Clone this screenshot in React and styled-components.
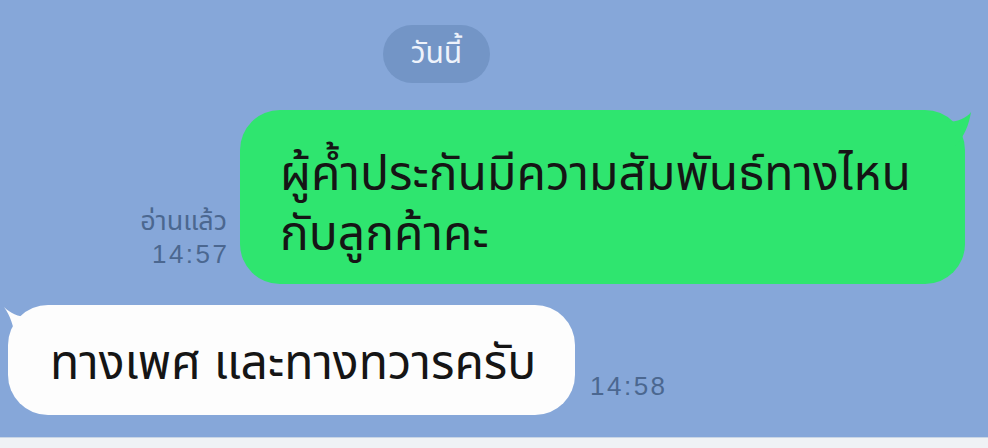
import React from "react";
import styled, { createGlobalStyle } from "styled-components";

const GlobalStyle = createGlobalStyle`
  html, body {
    margin: 0;
    padding: 0;
    background: #86a7d9;
  }
`;

const thai = `"Noto Sans Thai", "Noto Sans Thai UI", "Noto Sans Thai Looped", Loma, Garuda, "Noto Sans", sans-serif`;

const ChatApp = () => {
  return (
    <>
      <GlobalStyle />
      <Screen>
        <DateRow>
          <DatePill>วันนี้</DatePill>
        </DateRow>

        <OutRow>
          <Meta>
            <span>อ่านแล้ว</span>
            <Time>14:57</Time>
          </Meta>
          <Bubble mine>
            ผู้ค้ำประกันมีความสัมพันธ์ทางไหน
            <br />
            กับลูกค้าคะ
          </Bubble>
        </OutRow>

        <InRow>
          <Bubble>ทางเพศ และทางทวารครับ</Bubble>
          <Time last>14:58</Time>
        </InRow>

        <InputEdge />
      </Screen>
    </>
  );
};

const Screen = styled.div`
  width: 988px;
  height: 448px;
  overflow: hidden;
  background: #86a7d9;
  display: flex;
  flex-direction: column;
  padding-top: 25px;
  box-sizing: border-box;
`;

const DateRow = styled.div`
  display: flex;
  padding-left: 383px;
`;

const DatePill = styled.div`
  width: 107px;
  height: 58px;
  border-radius: 29px;
  background: #7395c6;
  color: #eef3fb;
  font-family: ${thai};
  font-size: 30px;
  display: flex;
  align-items: center;
  justify-content: center;
`;

const OutRow = styled.div`
  display: flex;
  justify-content: flex-end;
  align-items: flex-end;
  gap: 13px;
  margin-top: 27px;
  padding-right: 23px;
`;

const Meta = styled.div`
  display: flex;
  flex-direction: column;
  align-items: flex-end;
  gap: 2px;
  margin-bottom: 15px;
  color: #4b6790;
  font-family: ${thai};
  font-size: 27px;
  line-height: 30px;
`;

const Bubble = styled.div`
  position: relative;
  box-sizing: border-box;
  width: ${(p) => (p.mine ? "725px" : "567px")};
  height: ${(p) => (p.mine ? "174px" : "110px")};
  padding: ${(p) => (p.mine ? "36px 30px 0 40px" : "10px 30px 0 42px")};
  display: flex;
  flex-direction: column;
  justify-content: ${(p) => (p.mine ? "flex-start" : "center")};
  border-radius: 40px;
  background: ${(p) => (p.mine ? "#2fe56f" : "#fdfdfd")};
  color: #151515;
  font-family: ${thai};
  font-size: 48px;
  line-height: 60px;
  white-space: nowrap;
  &::before {
    content: "";
    position: absolute;
    top: 2px;
    width: 26px;
    height: 34px;
    background: inherit;
    ${(p) =>
      p.mine
        ? `right: -8px; clip-path: path("M0,10 C10,10 20,6 24,0 C22,12 18,24 8,34 L0,34 Z");`
        : `left: -6px; clip-path: path("M2,0 C8,6 16,10 26,10 L26,34 L14,34 C12,20 8,8 2,0 Z");`}
  }
`;

const InRow = styled.div`
  display: flex;
  align-items: flex-end;
  gap: 15px;
  margin-top: 21px;
  padding-left: 8px;
`;

const Time = styled.span`
  margin-bottom: ${(p) => (p.last ? "13px" : "0")};
  color: #4b6790;
  font-family: "Liberation Sans", Arial, sans-serif;
  font-size: 26px;
  letter-spacing: 2.5px;
  margin-right: -2.5px;
`;

const InputEdge = styled.div`
  margin-top: auto;
  height: 10px;
  background: #eff2f5;
  border-top: 1px solid #c9d6e6;
`;

export default ChatApp;
